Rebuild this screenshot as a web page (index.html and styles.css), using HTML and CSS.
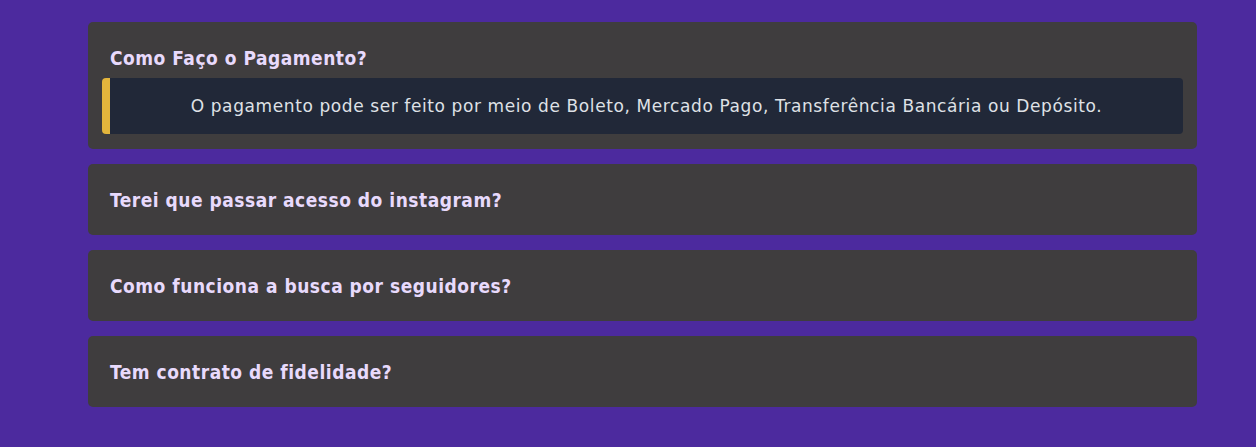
FILE: index.html
```html
<!DOCTYPE html>
<html lang="pt-BR">
<head>
<meta charset="utf-8">
<title>FAQ</title>
<link rel="stylesheet" href="styles.css">
</head>
<body>
<main class="faq">
  <section class="card open">
    <h3 class="question">Como Faço o Pagamento?</h3>
    <div class="answer"><p>O pagamento pode ser feito por meio de Boleto, Mercado Pago, Transferência Bancária ou Depósito.</p></div>
  </section>
  <section class="card">
    <h3 class="question">Terei que passar acesso do instagram?</h3>
  </section>
  <section class="card">
    <h3 class="question">Como funciona a busca por seguidores?</h3>
  </section>
  <section class="card">
    <h3 class="question">Tem contrato de fidelidade?</h3>
  </section>
</main>
</body>
</html>
```

FILE: styles.css
```css
html, body {
  margin: 0;
  padding: 0;
  background: #4c2a9e;
  height: 100%;
}
body {
  font-family: "DejaVu Sans", "Open Sans", sans-serif;
}
.faq {
  width: 1109px;
  margin-left: 88px;
  padding-top: 22px;
  display: flex;
  flex-direction: column;
  gap: 15px;
}
.card {
  background: #3f3d3e;
  border-radius: 5px;
  padding: 20px 14px;
}
.card.open {
  padding-bottom: 15px;
}
.question {
  margin: 0;
  padding: 2px 8px 0;
  height: 29px;
  line-height: 29px;
  font-family: "DejaVu Sans Condensed", "DejaVu Sans", sans-serif;
  font-stretch: condensed;
  font-weight: bold;
  font-size: 19px;
  letter-spacing: 0.5px;
  color: #e8dafc;
}
.answer {
  margin-top: 5px;
  background: #212838;
  border-left: 8px solid #e3b53c;
  border-radius: 4px;
  height: 56px;
  display: flex;
  align-items: center;
  justify-content: center;
}
.answer p {
  margin: 0;
  font-size: 17px;
  letter-spacing: 0.6px;
  color: #dfe1e6;
}
```
